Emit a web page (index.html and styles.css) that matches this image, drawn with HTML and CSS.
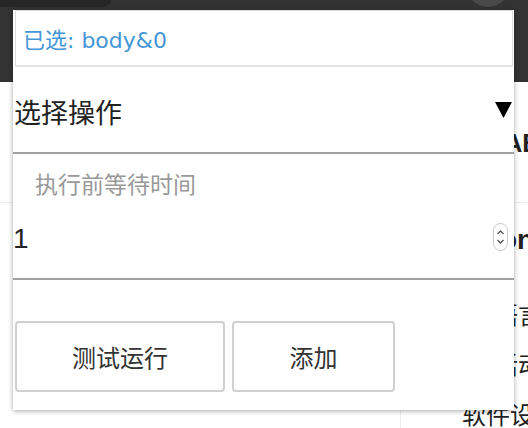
FILE: index.html
```html
<!DOCTYPE html>
<html lang="zh">
<head>
<meta charset="utf-8">
<link rel="stylesheet" href="styles.css">
</head>
<body>
<div class="topbar">
  <div class="tab"></div>
  <div class="avatar"></div>
</div>
<div class="page">
  <div class="row-head"><span class="head-text">LAB</span></div>
  <div class="row-on"><span class="on-text">on</span></div>
  <div class="row-line l1">语言</div>
  <div class="row-line l2">活动</div>
  <div class="side"><span class="side-text">软件设置</span></div>
</div>

<div class="panel">
  <div class="selected">已选: body&amp;0</div>
  <div class="select-row">
    <span class="select-text">选择操作</span>
    <svg class="caret" width="17" height="16" viewBox="0 0 17 16"><polygon points="0,0 17,0 8.5,16" fill="#000"/></svg>
  </div>
  <div class="field">
    <div class="label">执行前等待时间</div>
    <div class="input-row">
      <span class="value">1</span>
      <svg class="spin" width="15" height="28" viewBox="0 0 15 28">
        <rect x="0.5" y="0.5" width="14" height="27" rx="7" fill="#fff" stroke="#c8c8c8"/>
        <polyline points="4.5,11 7.5,8 10.5,11" fill="none" stroke="#555" stroke-width="1.4"/>
        <polyline points="4.5,17 7.5,20 10.5,17" fill="none" stroke="#555" stroke-width="1.4"/>
      </svg>
    </div>
  </div>
  <div class="buttons">
    <button class="btn btn-test">测试运行</button>
    <button class="btn btn-add">添加</button>
  </div>
</div>
</body>
</html>
```

FILE: styles.css
```css
html, body {
  margin: 0;
  padding: 0;
}
body {
  width: 528px;
  height: 428px;
  overflow: hidden;
  background: #fff;
  font-family: "Noto Sans CJK SC", "Noto Sans", sans-serif;
  position: relative;
}
.topbar {
  height: 82px;
  background: #333;
  position: relative;
  overflow: hidden;
}
.tab {
  position: absolute;
  left: 0;
  top: -10px;
  width: 112px;
  height: 17px;
  background: #262626;
  border-bottom-right-radius: 10px;
}
.avatar {
  position: absolute;
  left: 466px;
  top: -37px;
  width: 44px;
  height: 44px;
  border-radius: 50%;
  background: #4a4a4a;
}
.page {
  height: 346px;
  color: #222;
  white-space: nowrap;
  overflow: hidden;
}
.row-head {
  height: 121px;
  border-bottom: 1px solid #eee;
  box-sizing: border-box;
  padding-top: 46px;
  padding-left: 489px;
}
.head-text {
  font-family: "Liberation Sans", sans-serif;
  font-weight: bold;
  font-size: 25px;
  line-height: 30px;
}
.row-on {
  height: 70px;
  padding-top: 22px;
  padding-left: 500px;
  box-sizing: border-box;
}
.on-text {
  font-family: "Liberation Sans", sans-serif;
  font-weight: bold;
  font-size: 28px;
  line-height: 30px;
}
.row-line {
  font-size: 24px;
  line-height: 30px;
  padding-left: 494px;
}
.l1 {
  margin-top: 26px;
}
.l2 {
  margin-top: 20px;
}
.side {
  margin-left: 400px;
  margin-top: 14px;
  border-left: 1px solid #eee;
  padding-left: 61px;
  padding-top: 6px;
  height: 30px;
}
.side-text {
  font-size: 24px;
  line-height: 30px;
}

/* Popup panel */
.panel {
  position: absolute;
  left: 13px;
  top: 10px;
  width: 501px;
  height: 400px;
  background: #fff;
  box-shadow: 0 1px 5px rgba(0, 0, 0, 0.35);
  display: flex;
  flex-direction: column;
  box-sizing: border-box;
}
.selected {
  height: 57px;
  margin: 0 1px 0 2px;
  border: 1px solid #ddd;
  border-bottom: 2px solid #e3e3e3;
  box-sizing: border-box;
  padding-left: 7px;
  display: flex;
  align-items: center;
  color: #4596d6;
  font-family: "DejaVu Sans", "Noto Sans CJK SC", sans-serif;
  font-size: 22px;
}
.select-row {
  height: 87px;
  box-sizing: border-box;
  border-bottom: 2px solid #a0a0a0;
  display: flex;
  align-items: center;
  justify-content: space-between;
  padding: 4px 2px 0 1px;
}
.select-text {
  font-size: 27px;
  color: #222;
  line-height: 32px;
}
.caret {
  display: block;
  margin-top: -4px;
}
.field {
  border-bottom: 2px solid #a0a0a0;
  padding-top: 15px;
}
.label {
  padding-left: 22px;
  font-size: 23px;
  line-height: 28px;
  color: #999;
}
.input-row {
  height: 81px;
  display: flex;
  align-items: center;
  justify-content: space-between;
  padding: 0 6px 0 0;
}
.value {
  font-family: "Liberation Sans", sans-serif;
  font-size: 28px;
  color: #222;
  line-height: 32px;
  margin-top: 2px;
}
.spin {
  display: block;
  margin-top: -2px;
}
.buttons {
  display: flex;
  gap: 7px;
  margin-top: 41px;
  padding-left: 2px;
}
.btn {
  height: 71px;
  background: #fff;
  border: 2px solid #d0d0d0;
  border-radius: 4px;
  font-family: "Noto Sans CJK SC", sans-serif;
  font-size: 24px;
  color: #333;
  padding: 0;
}
.btn-test {
  width: 210px;
}
.btn-add {
  width: 163px;
}
```
